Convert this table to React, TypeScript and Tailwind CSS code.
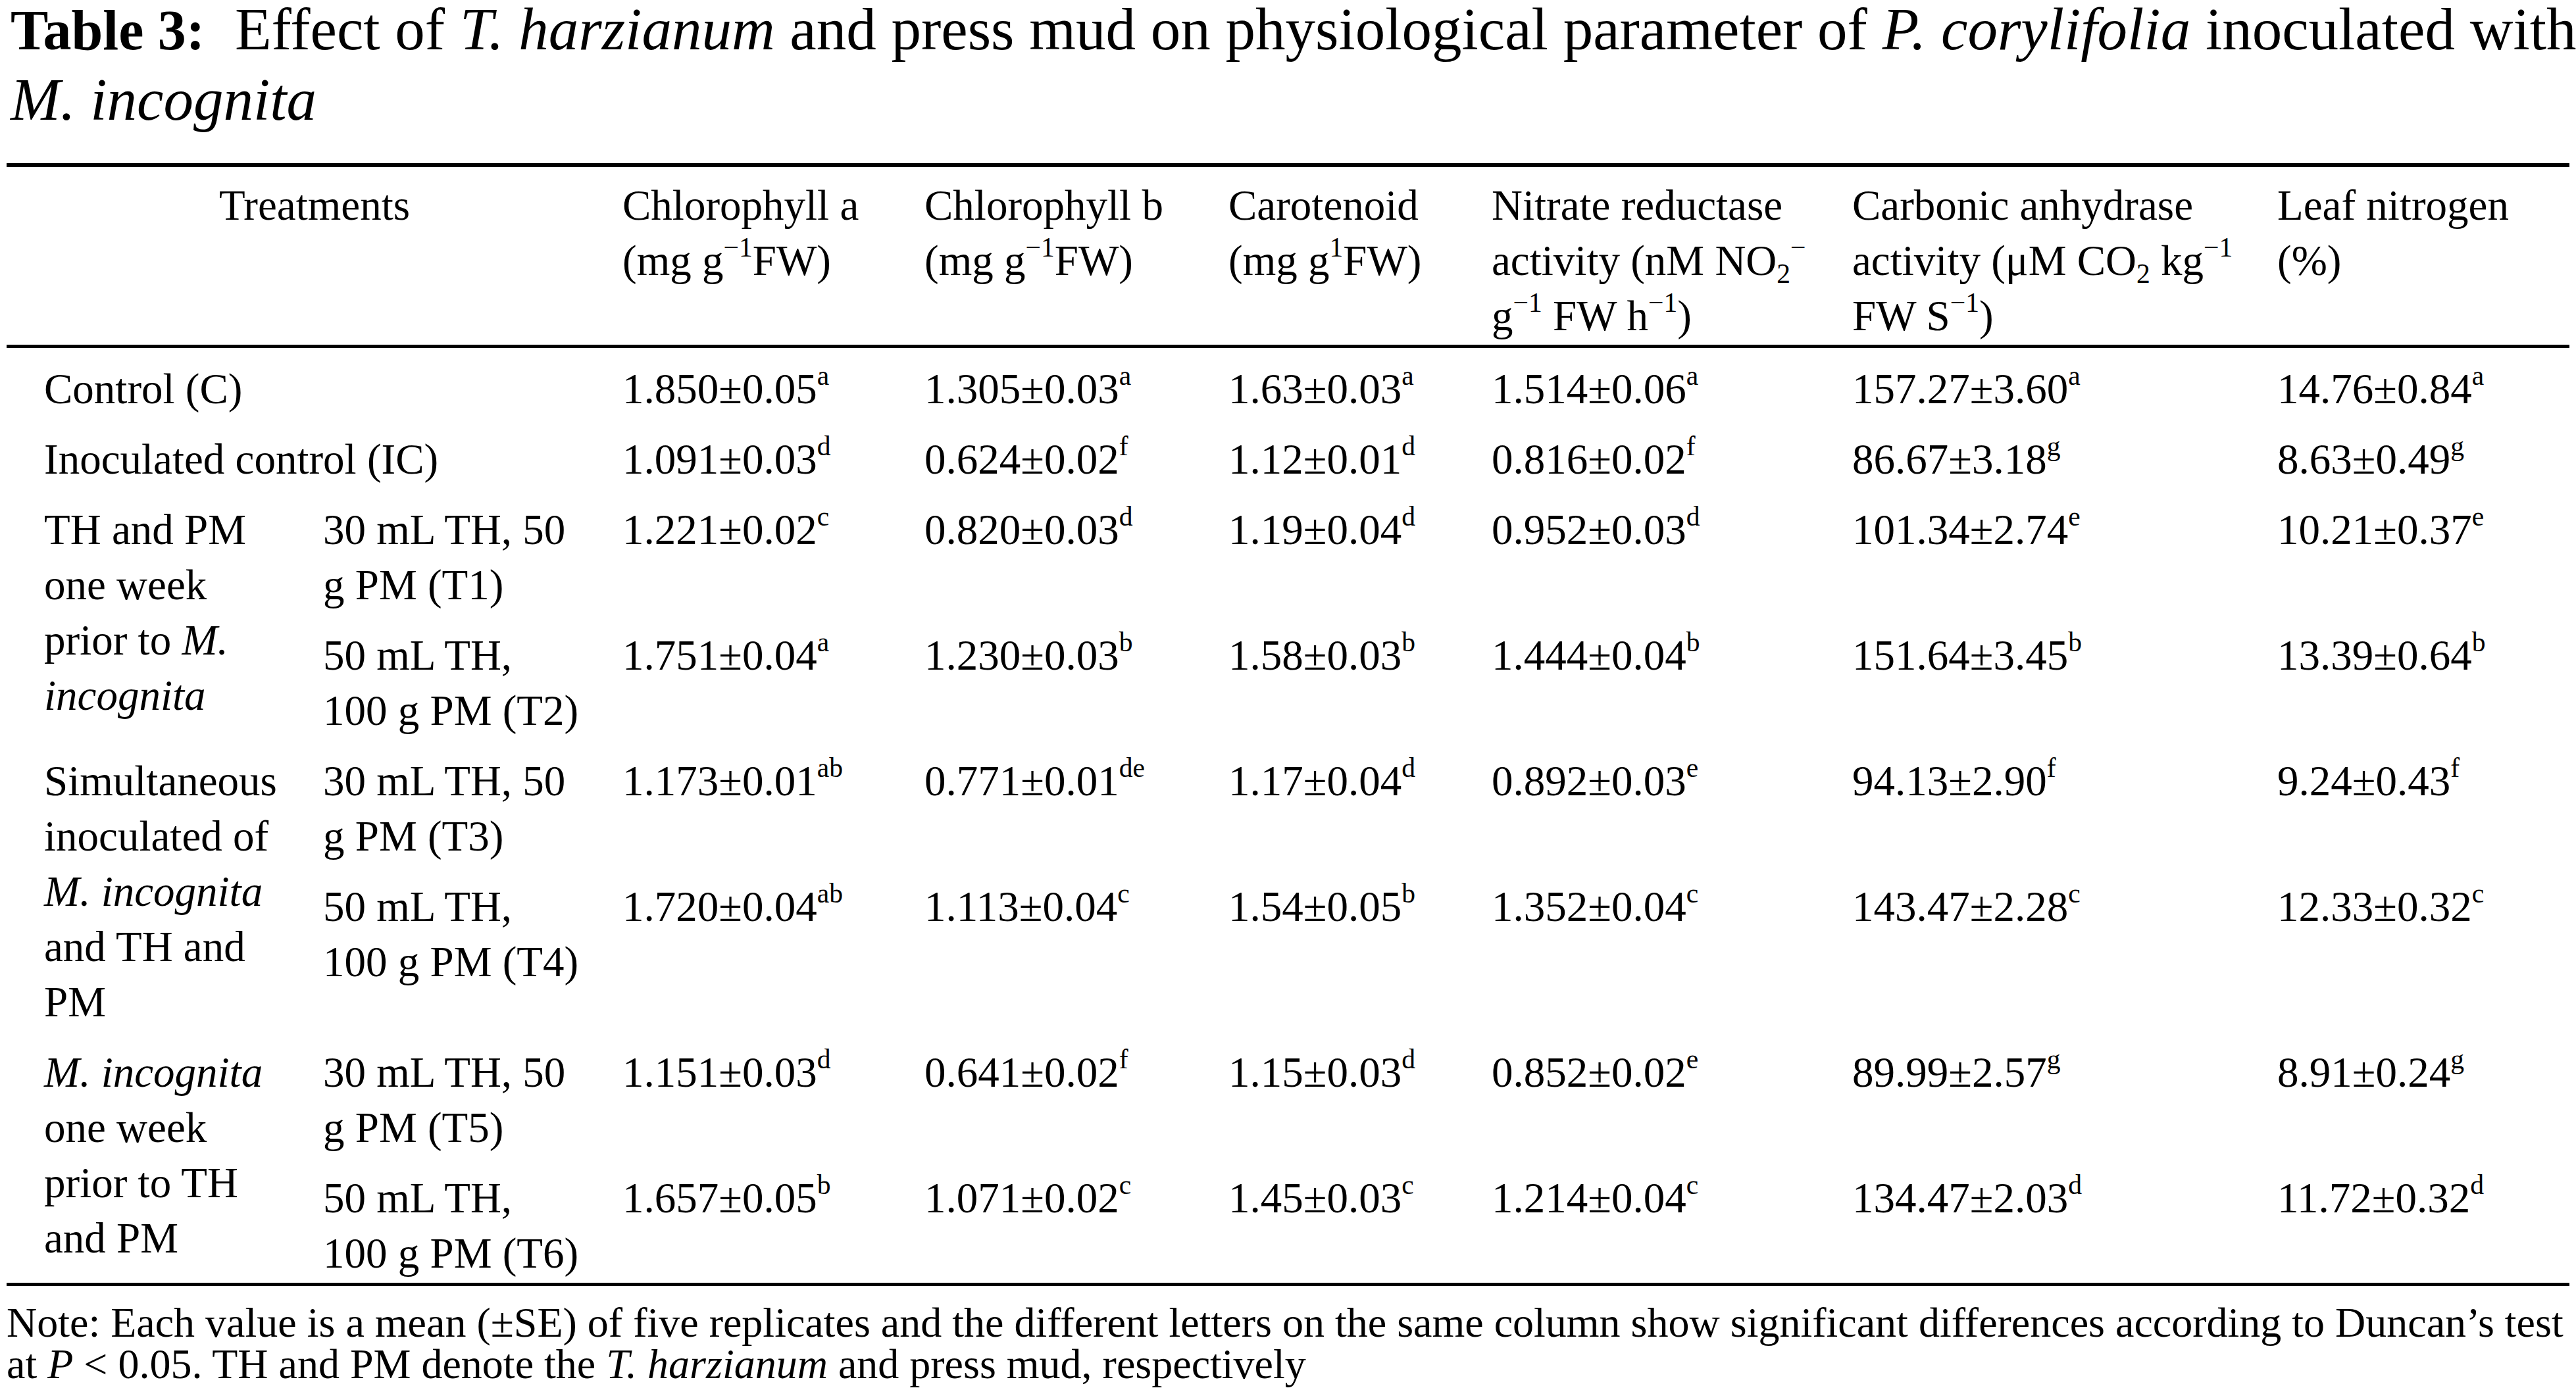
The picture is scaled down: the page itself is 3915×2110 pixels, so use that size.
import type { ReactNode } from 'react';

const COLS = 'grid grid-cols-[481px_455px_459px_462px_400px_548px_646px_1fr]';
const SUBCOLS = 'grid grid-cols-[455px_459px_462px_400px_548px_646px_1fr]';

function Sup({ children }: { children: ReactNode }) {
  return <sup className="relative -top-[0.68em] text-[0.64em]">{children}</sup>;
}

function Sub({ children }: { children: ReactNode }) {
  return <sub className="relative top-[0.3em] text-[0.64em]">{children}</sub>;
}

type Val = [string, string];

function Value({ v }: { v: Val }) {
  return (
    <div>
      {v[0]}
      <Sup>{v[1]}</Sup>
    </div>
  );
}

const rows: Record<string, Val[]> = {
  C: [['1.850±0.05', 'a'], ['1.305±0.03', 'a'], ['1.63±0.03', 'a'], ['1.514±0.06', 'a'], ['157.27±3.60', 'a'], ['14.76±0.84', 'a']],
  IC: [['1.091±0.03', 'd'], ['0.624±0.02', 'f'], ['1.12±0.01', 'd'], ['0.816±0.02', 'f'], ['86.67±3.18', 'g'], ['8.63±0.49', 'g']],
  T1: [['1.221±0.02', 'c'], ['0.820±0.03', 'd'], ['1.19±0.04', 'd'], ['0.952±0.03', 'd'], ['101.34±2.74', 'e'], ['10.21±0.37', 'e']],
  T2: [['1.751±0.04', 'a'], ['1.230±0.03', 'b'], ['1.58±0.03', 'b'], ['1.444±0.04', 'b'], ['151.64±3.45', 'b'], ['13.39±0.64', 'b']],
  T3: [['1.173±0.01', 'ab'], ['0.771±0.01', 'de'], ['1.17±0.04', 'd'], ['0.892±0.03', 'e'], ['94.13±2.90', 'f'], ['9.24±0.43', 'f']],
  T4: [['1.720±0.04', 'ab'], ['1.113±0.04', 'c'], ['1.54±0.05', 'b'], ['1.352±0.04', 'c'], ['143.47±2.28', 'c'], ['12.33±0.32', 'c']],
  T5: [['1.151±0.03', 'd'], ['0.641±0.02', 'f'], ['1.15±0.03', 'd'], ['0.852±0.02', 'e'], ['89.99±2.57', 'g'], ['8.91±0.24', 'g']],
  T6: [['1.657±0.05', 'b'], ['1.071±0.02', 'c'], ['1.45±0.03', 'c'], ['1.214±0.04', 'c'], ['134.47±2.03', 'd'], ['11.72±0.32', 'd']],
};

function SimpleRow({ label, vals }: { label: string; vals: Val[] }) {
  return (
    <div className={`${COLS} pt-[20px] pb-[3px]`}>
      <div className="col-span-2 pl-[57px]">{label}</div>
      {vals.map((v, i) => (
        <Value key={i} v={v} />
      ))}
    </div>
  );
}

function SubRow({ dose, vals }: { dose: ReactNode; vals: Val[] }) {
  return (
    <div className={`${SUBCOLS} pt-[20px] pb-[3px]`}>
      <div>{dose}</div>
      {vals.map((v, i) => (
        <Value key={i} v={v} />
      ))}
    </div>
  );
}

function GroupRow({ label, subs }: { label: ReactNode; subs: { dose: ReactNode; vals: Val[] }[] }) {
  return (
    <div className="flex">
      <div className="w-[481px] shrink-0 pl-[57px] pt-[20px] pb-[3px]">{label}</div>
      <div className="flex-1">
        {subs.map((s, i) => (
          <SubRow key={i} dose={s.dose} vals={s.vals} />
        ))}
      </div>
    </div>
  );
}

const low = (
  <>
    30 mL TH, 50
    <br />g PM
  </>
);

export default function App() {
  return (
    <div className="h-[2110px] w-full overflow-hidden bg-white text-black font-['Liberation_Serif','Times_New_Roman',serif]">
      <div className="px-[10px]">
        {/* Caption */}
        <div className="pl-[6px] text-[91px] leading-[90px]">
          <div className="whitespace-nowrap">
            <b className="text-[86px]">Table 3:</b>&nbsp; Effect of <i>T. harzianum</i> and press mud on physiological
            parameter of <i>P. corylifolia</i> inoculated with
          </div>
          <div className="mt-[16px]">
            <i>M. incognita</i>
          </div>
        </div>

        <div className="mt-[51px] h-[6px] bg-black" />

        {/* Header */}
        <div className={`${COLS} pt-[16px] pb-[2px] text-[65px] leading-[84px]`}>
          <div className="col-span-2 text-center">Treatments</div>
          <div>
            Chlorophyll a<br />
            (mg g<Sup>−1</Sup>FW)
          </div>
          <div>
            Chlorophyll b<br />
            (mg g<Sup>−1</Sup>FW)
          </div>
          <div>
            Carotenoid
            <br />
            (mg g<Sup>1</Sup>FW)
          </div>
          <div>
            Nitrate reductase
            <br />
            activity (nM NO<Sub>2</Sub>
            <Sup>−</Sup>
            <br />
            g<Sup>−1</Sup> FW h<Sup>−1</Sup>)
          </div>
          <div>
            Carbonic anhydrase
            <br />
            activity (μM CO<Sub>2</Sub> kg<Sup>−1</Sup>
            <br />
            FW S<Sup>−1</Sup>)
          </div>
          <div>
            Leaf nitrogen
            <br />
            (%)
          </div>
        </div>

        <div className="h-[5px] bg-black" />

        {/* Body */}
        <div className="text-[65px] leading-[84px]">
          <SimpleRow label="Control (C)" vals={rows.C} />
          <SimpleRow label="Inoculated control (IC)" vals={rows.IC} />
          <GroupRow
            label={
              <>
                TH and PM
                <br />
                one week
                <br />
                prior to <i>M.</i>
                <br />
                <i>incognita</i>
              </>
            }
            subs={[
              { dose: <>{low} (T1)</>, vals: rows.T1 },
              { dose: <>50 mL TH,<br />100 g PM (T2)</>, vals: rows.T2 },
            ]}
          />
          <GroupRow
            label={
              <>
                Simultaneous
                <br />
                inoculated of
                <br />
                <i>M. incognita</i>
                <br />
                and TH and
                <br />
                PM
              </>
            }
            subs={[
              { dose: <>{low} (T3)</>, vals: rows.T3 },
              { dose: <>50 mL TH,<br />100 g PM (T4)</>, vals: rows.T4 },
            ]}
          />
          <GroupRow
            label={
              <>
                <i>M. incognita</i>
                <br />
                one week
                <br />
                prior to TH
                <br />
                and PM
              </>
            }
            subs={[
              { dose: <>{low} (T5)</>, vals: rows.T5 },
              { dose: <>50 mL TH,<br />100 g PM (T6)</>, vals: rows.T6 },
            ]}
          />
        </div>

        <div className="h-[5px] bg-black" />

        {/* Note */}
        <div className="mt-[24px] text-[64px] leading-[63px]">
          <div className="whitespace-nowrap">
            Note: Each value is a mean (±SE) of five replicates and the different letters on the same column show
            significant differences according to Duncan’s test
          </div>
          <div className="whitespace-nowrap">
            at <i>P</i> &lt; 0.05. TH and PM denote the <i>T. harzianum</i> and press mud, respectively
          </div>
        </div>
      </div>
    </div>
  );
}
